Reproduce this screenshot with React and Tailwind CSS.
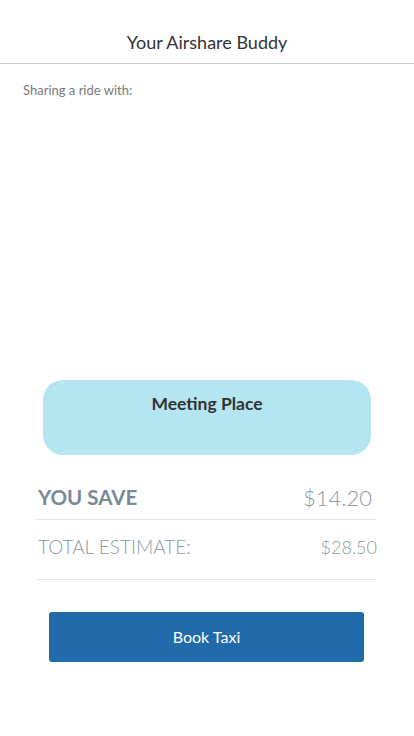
export default function App() {
  return (
    <div className="min-h-screen bg-white font-['Lato',sans-serif]">
      <header className="h-[64px] border-b border-[#cccccc] pt-[30px] text-center text-[18px] leading-[24px] text-[#333333]">
        Your Airshare Buddy
      </header>

      <div className="px-[23px] pt-[17px]">
        <p className="text-[13px] leading-[18px] text-[#7a7a7a]">Sharing a ride with:</p>
      </div>

      <div className="mx-[43px] mt-[281px] h-[75px] rounded-[20px] bg-[#b5e5f1] pt-[12px] text-center">
        <span className="text-[17.5px] font-bold leading-[22px] text-[#333333]">Meeting Place</span>
      </div>

      <div className="ml-[36px] mt-[24px] w-[340px]">
        <div className="flex h-[41px] items-center justify-between border-b border-[#e6e6e6] pb-[3px] pl-[2px] pr-[4px]">
          <span className="text-[20.5px] font-bold text-[#778a96]">YOU SAVE</span>
          <span className="text-[22px] font-light text-[#8a9ba5]">$14.20</span>
        </div>
        <div className="flex h-[60px] items-center justify-between border-b border-[#e6e6e6] pb-[5px] pl-[2px]">
          <span className="text-[19px] font-light text-[#8c99a1]">TOTAL ESTIMATE:</span>
          <span className="-mr-[1px] text-[18px] font-light text-[#8c99a1]">$28.50</span>
        </div>
      </div>

      <div className="mx-[49px] mt-[32px] w-[315px]">
        <button className="flex h-[50px] w-full items-center justify-center rounded-[3px] bg-[#216bab] text-[16px] text-white">
          Book Taxi
        </button>
      </div>
    </div>
  );
}
